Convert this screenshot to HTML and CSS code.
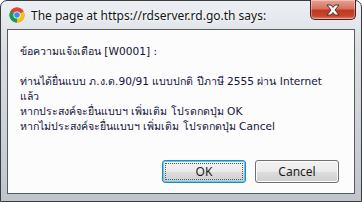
FILE: index.html
```html
<!DOCTYPE html>
<html>
<head>
<meta charset="utf-8">
<link rel="stylesheet" href="styles.css">
</head>
<body>
<div class="window">
  <div class="titlebar">
    <svg class="chrome-icon" viewBox="0 0 16 16" width="16" height="16">
      <circle cx="8" cy="8" r="7.5" fill="#db4437"/>
      <path d="M8 8 L14.5 4.25 A7.5 7.5 0 0 1 8 15.5 Z" fill="#f4c20d"/>
      <path d="M8 8 L8 15.5 A7.5 7.5 0 0 1 1.5 4.25 Z" fill="#0f9d58"/>
      <path d="M8 8 L1.5 4.25 A7.5 7.5 0 0 1 14.5 4.25 Z" fill="#db4437"/>
      <circle cx="8" cy="8" r="3.6" fill="#fff"/>
      <circle cx="8" cy="8" r="2.8" fill="#4285f4"/>
    </svg>
    <span class="title">The page at https://rdserver.rd.go.th says:</span>
    <div class="close">
      <svg viewBox="0 0 16 12" width="16" height="12">
        <path d="M2 1 L6 1 L8 3.5 L10 1 L14 1 L10 6 L14 11 L10 11 L8 8.5 L6 11 L2 11 L6 6 Z" fill="#fff" stroke="#5a2a2a" stroke-width="1"/>
      </svg>
    </div>
  </div>
  <div class="client">
    <div class="message">
      <p class="heading">ข้อความแจ้งเตือน [W0001] :</p>
      <p class="body">ท่านได้ยื่นแบบ ภ.ง.ด.90/91 แบบปกติ ปีภาษี 2555 ผ่าน Internet<br>แล้ว<br>หากประสงค์จะยื่นแบบฯ เพิ่มเติม โปรดกดปุ่ม OK<br>หากไม่ประสงค์จะยื่นแบบฯ เพิ่มเติม โปรดกดปุ่ม Cancel</p>
    </div>
    <div class="buttons">
      <button class="btn focused"><span class="focus-ring">OK</span></button>
      <button class="btn"><span class="focus-ring plain">Cancel</span></button>
    </div>
  </div>
</div>
</body>
</html>
```
FILE: styles.css
```css
html, body {
  margin: 0;
  padding: 0;
  width: 362px;
  height: 202px;
  overflow: hidden;
  background: #ffffff;
}
.window {
  box-sizing: border-box;
  width: 362px;
  height: 202px;
  border: 1px solid #3c3c3c;
  border-radius: 7px 7px 0 0;
  background: linear-gradient(180deg, #eceff3 0%, #d9dee4 25%, #cdd3da 60%, #bfc5cc 100%);
  display: flex;
  flex-direction: column;
  padding: 0 6px 7px 6px;
}
.titlebar {
  height: 28px;
  display: flex;
  align-items: center;
  position: relative;
}
.chrome-icon {
  margin-left: 2px;
  margin-right: 6px;
}
.title {
  font-family: "Noto Sans", "Open Sans", sans-serif;
  font-size: 12px;
  color: #141414;
  text-shadow: 0 0 6px #ffffff, 0 0 3px #ffffff;
  margin-top: 1px;
}
.close {
  position: absolute;
  right: -1px;
  top: -1px;
  width: 46px;
  height: 20px;
  box-sizing: border-box;
  border: 1px solid #4a1f1a;
  border-top: none;
  border-radius: 0 0 5px 5px;
  background: linear-gradient(180deg, #e8a393 0%, #d4725f 45%, #c2371f 55%, #c9452e 85%, #d98a70 100%);
  display: flex;
  align-items: center;
  justify-content: center;
  box-shadow: inset 0 0 0 1px rgba(255,255,255,0.35);
}
.client {
  flex: 1;
  background: #fcfcfc;
  border: 1px solid #5a5a5a;
  display: flex;
  flex-direction: column;
  padding: 14px 0 0 12px;
}
.message {
  flex: 1;
  font-family: Tahoma, "DejaVu Sans", "Noto Sans", sans-serif;
  font-size: 10.6px;
  line-height: 15px;
  color: #14143a;
}
.message p {
  margin: 0;
}
.heading {
  margin-bottom: 15px !important;
}
.buttons {
  display: flex;
  justify-content: flex-end;
  gap: 9px;
  padding: 0 15px 10px 0;
}
.btn {
  width: 84px;
  height: 23px;
  box-sizing: border-box;
  border: 1px solid #707070;
  border-radius: 3px;
  background: linear-gradient(180deg, #f2f2f2 0%, #ebebeb 50%, #dddddd 51%, #cfcfcf 100%);
  box-shadow: inset 0 0 0 1px #fbfbfb;
  padding: 2px;
  font-family: "Noto Sans", "Open Sans", sans-serif;
  font-size: 12px;
  color: #1b1b1b;
  display: flex;
}
.btn.focused {
  border-color: #3c7fb1;
  box-shadow: inset 0 0 0 1px #48d4f7;
}
.focus-ring {
  flex: 1;
  display: flex;
  align-items: center;
  justify-content: center;
  border: 1px dotted #555;
}
.focus-ring.plain {
  border-color: transparent;
}
```
